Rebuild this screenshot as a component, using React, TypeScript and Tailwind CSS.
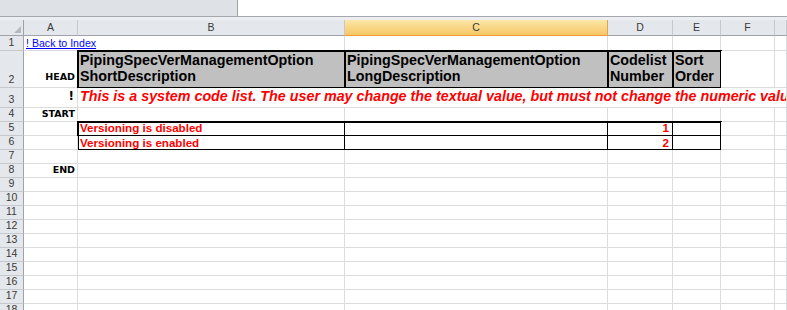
import React from "react";

const SANS = "font-['Liberation_Sans',Arial,sans-serif]";
const LBL = "font-['DejaVu_Sans',Verdana,sans-serif]";

function Cell({ className = "", children }: { className?: string; children?: React.ReactNode }) {
  return <div className={`border-r border-b border-[#dadcdd] bg-white ${className}`}>{children}</div>;
}

function RowHead({ n, className = "" }: { n: number; className?: string }) {
  return (
    <div
      className={`flex items-end justify-center border-r border-b border-r-[#9ea3a9] border-b-[#c5c9ce] bg-[#e4e7eb] pb-px text-[10.5px] leading-[13px] text-[#3a3a3a] ${className}`}
    >
      {n}
    </div>
  );
}

function ColHead({ l, sel = false }: { l: string; sel?: boolean }) {
  return (
    <div
      className={`flex items-center justify-center border-r border-b text-[10.5px] leading-[13px] text-[#3a3a3a] ${
        sel
          ? "border-r-[#e2a64a] border-b-[#f29a38] bg-linear-to-b from-[#fbe7a6] to-[#f6c765]"
          : "border-r-[#c5c9ce] border-b-[#9ea3a9] bg-[#e4e7eb]"
      }`}
    >
      {l}
    </div>
  );
}

function HeadCell({ lines }: { lines: string[] }) {
  return (
    <div className="flex flex-col justify-end bg-[#c0c0c0] px-[2px] pb-[4px] text-[14.3px] font-bold leading-[16px] text-black outline-2 -outline-offset-1 outline-black whitespace-nowrap overflow-visible">
      {lines.map((t) => (
        <div key={t}>{t}</div>
      ))}
    </div>
  );
}

function Label({ t, className = "" }: { t: string; className?: string }) {
  return (
    <Cell className={`flex items-end justify-end pr-[2px] pb-[1px] ${LBL} text-[9.5px] font-bold leading-[12px] text-black ${className}`}>
      {t}
    </Cell>
  );
}

export default function App() {
  const emptyRows = [9, 10, 11, 12, 13, 14, 15, 16, 17, 18];
  return (
    <div className={`h-[310px] w-[787px] overflow-hidden bg-white ${SANS}`}>
      <div className="flex h-[17px] border-b border-[#a3a8ae]">
        <div className="w-[238px] border-r border-[#9ea3a9] bg-[#dee2e7]" />
        <div className="flex-1 bg-white" />
      </div>
      <div className="h-[3px] bg-[#eceef1]" />

      <div className="grid grid-cols-[24px_54px_267px_263px_65px_48px_54px_1fr] grid-rows-[16px_15px_37px_20px_repeat(15,14px)]">
        {/* header row */}
        <div className="flex items-end justify-end border-r border-b border-r-[#9ea3a9] border-b-[#9ea3a9] bg-[#e4e7eb] pr-[2px] pb-[2px]">
          <svg width="7" height="7" viewBox="0 0 7 7">
            <polygon points="7,0 7,7 0,7" fill="#b5bac0" />
          </svg>
        </div>
        <ColHead l="A" />
        <ColHead l="B" />
        <ColHead l="C" sel />
        <ColHead l="D" />
        <ColHead l="E" />
        <ColHead l="F" />
        <ColHead l="" />

        {/* row 1 */}
        <RowHead n={1} />
        <Cell className="col-span-2 flex items-end pl-[2px] pb-[1px]">
          <span className="text-[10.6px] leading-[12px] text-[#0000ff] underline">! Back to Index</span>
        </Cell>
        <Cell />
        <Cell />
        <Cell />
        <Cell />
        <Cell />

        {/* row 2 */}
        <RowHead n={2} />
        <Label t="HEAD" className="pb-[4px]" />
        <HeadCell lines={["PipingSpecVerManagementOption", "ShortDescription"]} />
        <HeadCell lines={["PipingSpecVerManagementOption", "LongDescription"]} />
        <HeadCell lines={["Codelist", "Number"]} />
        <HeadCell lines={["Sort", "Order"]} />
        <Cell />
        <Cell />

        {/* row 3 */}
        <RowHead n={3} className="pb-[3px]" />
        <Cell className={`flex items-end justify-end pr-[3px] pb-[4px] ${LBL} text-[12px] font-bold leading-[13px] text-black`}>!</Cell>
        <Cell className="col-span-6 flex items-end overflow-hidden pl-[2px] pb-[2px]">
          <span className="whitespace-nowrap text-[14.3px] font-bold italic leading-[17px] text-[#ff0000]">
            This is a system code list. The user may change the textual value, but must not change the numeric value
          </span>
        </Cell>

        {/* row 4 */}
        <RowHead n={4} />
        <Label t="START" />
        <Cell />
        <Cell />
        <Cell />
        <Cell />
        <Cell />
        <Cell />

        {/* rows 5-6 */}
        <RowHead n={5} />
        <Cell />
        <div className="col-span-4 row-span-2 grid grid-cols-[267px_263px_65px_48px] grid-rows-[14px_14px] bg-white outline-2 -outline-offset-1 outline-black text-[11.6px] font-bold leading-[13px] text-[#ff0000]">
          <div className="flex items-end border-r border-b border-black pl-[2px] pb-[1px] whitespace-nowrap">Versioning is disabled</div>
          <div className="border-r border-b border-black" />
          <div className="flex items-end justify-end border-r border-b border-black pr-[3px] pb-[1px]">1</div>
          <div className="border-b border-black" />
          <div className="flex items-end border-r border-black pl-[2px] pb-[1px] whitespace-nowrap">Versioning is enabled</div>
          <div className="border-r border-black" />
          <div className="flex items-end justify-end border-r border-black pr-[3px] pb-[1px]">2</div>
          <div />
        </div>
        <Cell />
        <Cell />
        <RowHead n={6} />
        <Cell />
        <Cell />
        <Cell />

        {/* row 7 */}
        <RowHead n={7} />
        <Cell />
        <Cell />
        <Cell />
        <Cell />
        <Cell />
        <Cell />
        <Cell />

        {/* row 8 */}
        <RowHead n={8} />
        <Label t="END" />
        <Cell />
        <Cell />
        <Cell />
        <Cell />
        <Cell />
        <Cell />

        {emptyRows.map((r) => (
          <React.Fragment key={r}>
            <RowHead n={r} />
            <Cell />
            <Cell />
            <Cell />
            <Cell />
            <Cell />
            <Cell />
            <Cell />
          </React.Fragment>
        ))}
      </div>
    </div>
  );
}
